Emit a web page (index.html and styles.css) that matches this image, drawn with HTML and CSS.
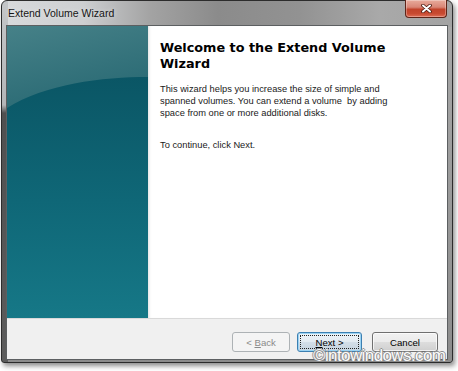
FILE: index.html
```html
<!DOCTYPE html>
<html lang="en">
<head>
  <meta charset="UTF-8" />
  <title>Extend Volume Wizard</title>
  <link rel="stylesheet" href="styles.css">
</head>
<body>
  <div class="window">
    <div class="titlebar">
      <span class="title">Extend Volume Wizard</span>
      <div class="close">
        <svg width="11" height="9" viewBox="0 0 11 9">
          <path d="M2 1.5 L9 7.5 M9 1.5 L2 7.5" stroke="#4a1a10" stroke-width="3.6" stroke-linecap="round" />
          <path d="M2 1.5 L9 7.5 M9 1.5 L2 7.5" stroke="#fff" stroke-width="2" stroke-linecap="round" />
        </svg>
      </div>
    </div>

    <div class="client">
      <div class="main">
        <div class="banner">
          <svg width="141" height="292" viewBox="0 0 141 292" preserveAspectRatio="none">
            <defs>
              <linearGradient id="low" x1="0" y1="0" x2="0" y2="1">
                <stop offset="0.15" stop-color="#0a5564" />
                <stop offset="0.6" stop-color="#0f6777" />
                <stop offset="1" stop-color="#167887" />
              </linearGradient>
              <linearGradient id="high" x1="0" y1="0" x2="0.4" y2="1">
                <stop offset="0" stop-color="#468188" />
                <stop offset="1" stop-color="#2a6a74" />
              </linearGradient>
            </defs>
            <rect width="141" height="292" fill="url(#low)" />
            <path d="M0 0 H141 V51 C95 51 38 58 0 82 Z" fill="url(#high)" />
          </svg>
        </div>
        <div class="page">
          <h1>Welcome to the Extend Volume Wizard</h1>
          <p>This wizard helps you increase the size of simple and spanned volumes. You can extend a volume&nbsp; by adding space from one or more additional disks.</p>
          <p class="next-hint">To continue, click Next.</p>
        </div>
      </div>

      <div class="buttons">
        <button class="btn back" disabled>&lt; <u>B</u>ack</button>
        <button class="btn default"><span class="focus"><u>N</u>ext &gt;</span></button>
        <button class="btn cancel">Cancel</button>
      </div>
    </div>
  </div>

  <div class="watermark">©intowindows.com</div>
</body>
</html>
```

FILE: styles.css
```css
body {
  margin: 0;
  background: #fff;
  font-family: "Liberation Sans", Arial, sans-serif;
  position: relative;
  width: 458px;
  height: 371px;
  overflow: hidden;
}
.window {
  margin-left: 1px;
  width: 452px;
  height: 363px;
  box-sizing: border-box;
  border: 1px solid #2c2c2c;
  border-radius: 6px 6px 3px 3px;
  padding: 0 4px 2px 4px;
  display: flex;
  flex-direction: column;
  background:
    linear-gradient(to bottom, #c4c6c8 0, #b4b6b8 104px, #505050 112px, #5c5c5c 100%) left top / 6px 100% no-repeat,
    linear-gradient(to right, #d8dadc 0%, #cdcfd1 18%, #a3a3a3 33%, #8b8b8b 48%, #929292 66%, #a9a9a9 84%, #a3a3a3 100%) left top / 100% 26px no-repeat,
    linear-gradient(to bottom, #aaaaaa, #8c8c8c);
  box-shadow: 2px 3px 5px rgba(0, 0, 0, 0.45);
}
.titlebar {
  height: 24px;
  flex: none;
  display: flex;
  justify-content: space-between;
  align-items: flex-start;
  padding-left: 2px;
}
.title {
  font-size: 10.5px;
  line-height: 12px;
  margin-top: 6px;
  color: #151515;
  text-shadow: 0 0 5px rgba(255, 255, 255, 0.6);
}
.close {
  width: 42px;
  height: 18px;
  margin-top: -1px;
  margin-right: 1px;
  box-sizing: border-box;
  border: 1px solid #5e2418;
  border-top: none;
  border-radius: 0 0 4px 4px;
  background: linear-gradient(to bottom, #e8ab9c 0%, #d98676 42%, #c2432b 55%, #c84a31 80%, #df6e56 100%);
  box-shadow: inset 0 0 0 1px rgba(255, 255, 255, 0.3);
  display: flex;
  justify-content: center;
  align-items: center;
}
.client {
  flex: 1;
  border: 1px solid #5c5f61;
  background: #f0f0f0;
  display: flex;
  flex-direction: column;
}
.main {
  height: 292px;
  flex: none;
  display: flex;
  background: #fff;
}
.banner {
  width: 141px;
  flex: none;
}
.banner svg {
  display: block;
}
.page {
  flex: 1;
  padding: 14px 0 0 12px;
  box-shadow: inset 3px 0 3px -2px rgba(0, 0, 0, 0.12);
}
h1 {
  font-family: "DejaVu Sans", Verdana, sans-serif;
  font-weight: bold;
  font-size: 12.8px;
  line-height: 15.5px;
  margin: 0;
  color: #000;
  width: 245px;
}
p {
  font-size: 9.3px;
  line-height: 12px;
  margin: 11.5px 0 0 0;
  color: #1a1a1a;
  width: 245px;
}
.next-hint {
  margin-top: 20px;
}
.buttons {
  flex: 1;
  border-top: 1px solid #d9d9d9;
  display: flex;
  justify-content: flex-end;
  align-items: flex-start;
  padding: 13px 9px 0 0;
}
.btn {
  height: 20px;
  width: 65px;
  box-sizing: border-box;
  padding: 0;
  border: 1px solid #707070;
  border-radius: 3px;
  background: linear-gradient(to bottom, #f2f2f2 0%, #ebebeb 48%, #dddddd 52%, #cfcfcf 100%);
  box-shadow: inset 0 0 0 1px rgba(255, 255, 255, 0.7);
  font-family: "Liberation Sans", Arial, sans-serif;
  font-size: 9.6px;
  color: #000;
}
.back {
  width: 58px;
  margin-right: 7px;
  border-color: #adb2b5;
  background: #f4f4f4;
  box-shadow: none;
  color: #8a8a8a;
}
.default {
  margin-right: 10px;
  border-color: #3c7fb1;
  background: linear-gradient(to bottom, #edf3f8 0%, #e2eaf1 48%, #d3dee8 52%, #c6d3df 100%);
  box-shadow: inset 0 0 0 1px #9bd3f3;
  display: flex;
  padding: 2px;
}
.focus {
  flex: 1;
  border: 1px dotted #222;
  display: flex;
  justify-content: center;
  align-items: center;
}
.cancel {
  width: 66px;
}
.watermark {
  position: absolute;
  left: 313px;
  top: 346px;
  font-family: "Liberation Sans", Arial, sans-serif;
  font-size: 17px;
  letter-spacing: -0.6px;
  color: #fbfbfb;
  text-shadow: 1px 0 #8e8e8e, -1px 0 #8e8e8e, 0 1px #8e8e8e, 0 -1px #8e8e8e;
}
```
